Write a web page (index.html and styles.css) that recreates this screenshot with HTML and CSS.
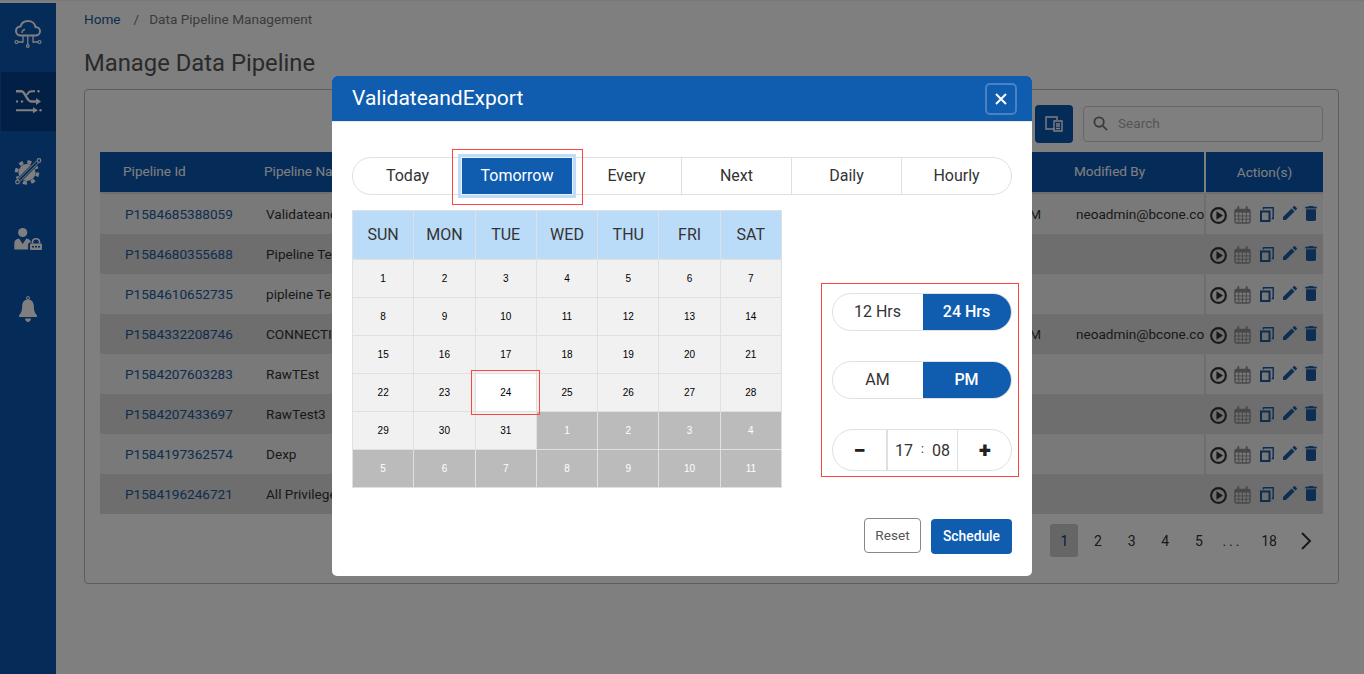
FILE: index.html
```html
<!DOCTYPE html>
<html>

<head>
    <title>Manage Data Pipeline</title>
    <link rel="stylesheet" href="styles.css">
</head>

<body>
<svg class="sprites" width="0" height="0">
    <symbol id="ic-play" viewBox="0 0 18 18">
        <circle cx="9" cy="9" r="7.800" fill="none" stroke="currentColor" stroke-width="2.200"/>
        <path d="M6.800 4.600 13.800 9 6.800 13.400z" fill="currentColor"/>
    </symbol>
    <symbol id="ic-cal" viewBox="0 0 18 19">
        <rect x="1" y="3.500" width="16" height="14.500" rx="1.500" fill="none" stroke="currentColor" stroke-width="1.400"/>
        <path d="M1 3.500h16v3.500H1z" fill="currentColor"/>
        <path d="M5 7v11M9 7v11M13 7v11M1 10.500h16M1 14h16" fill="none" stroke="currentColor" stroke-width="1"/>
        <path d="M4.500 1v3M13.500 1v3" fill="none" stroke="currentColor" stroke-width="2" stroke-linecap="round"/>
    </symbol>
    <symbol id="ic-copy" viewBox="0 0 14 15">
        <path d="M1 4.500h8.500V14H1z" fill="none" stroke="currentColor" stroke-width="2"/>
        <path d="M3.500 2.500V.8h9.700v10.700h-1.500" fill="none" stroke="currentColor" stroke-width="1.400"/>
    </symbol>
    <symbol id="ic-edit" viewBox="3 3 18 18">
        <path d="M3 17.250V21h3.750L17.810 9.940l-3.750-3.750L3 17.250zM20.710 7.040c.39-.39.39-1.020 0-1.410l-2.340-2.340c-.39-.39-1.020-.39-1.410 0l-1.830 1.830 3.750 3.750 1.830-1.830z" fill="currentColor"/>
    </symbol>
    <symbol id="ic-trash" viewBox="5 3 14 18">
        <path d="M6 19c0 1.100.9 2 2 2h8c1.100 0 2-.9 2-2V7H6v12zM19 4h-3.500l-1-1h-5l-1 1H5v2h14V4z" fill="currentColor"/>
    </symbol>
</svg>

<div class="app">
    <aside class="sidebar">
        <a class="side-item">
            <svg width="30" height="30" viewBox="0 0 30 30" fill="none" stroke="currentColor" stroke-width="2">
                <path d="M8 17.500c-3 0-5-2-5-4.500s2-4.500 4.500-4.500C8.500 5 11.500 3 15 3c4 0 7 2.500 7.500 6 2.500 0 4.500 2 4.500 4.300s-2 4.200-4.500 4.200z"/>
                <path d="M9 15c0-2 1.500-3.500 3-3.500" stroke-width="1.500"/>
                <path d="M14.800 17.500V27M10 17.500V24H5M20 17.500V24h5" stroke-width="1.300"/>
                <circle cx="14.800" cy="28" r="1.300" stroke-width="1.200"/><circle cx="3.500" cy="24" r="1.500" stroke-width="1.200"/><circle cx="26.500" cy="24" r="1.500" stroke-width="1.200"/>
            </svg>
        </a>
        <a class="side-item active">
            <svg width="26" height="26" viewBox="0 0 26 26" fill="none" stroke="currentColor" stroke-width="2.400">
                <path d="M0 2.200h5c5 0 5 10.300 10 10.300h7"/>
                <path d="M11 6c1-2.500 2.500-3.800 5-3.800h3M0 21.200h19" stroke-width="2"/>
                <path d="M20 9 25 12.500 20 16zM17 18.200l5 3-5 3z" fill="currentColor" stroke="none"/>
                <circle cx="22.500" cy="2.200" r="1.200" fill="currentColor" stroke="none"/>
                <circle cx="1" cy="12.500" r="1.200" fill="currentColor" stroke="none"/>
                <circle cx="6" cy="12.500" r="1.200" fill="currentColor" stroke="none"/>
                <circle cx="24.500" cy="21.200" r="1.200" fill="currentColor" stroke="none"/>
            </svg>
        </a>
        <a class="side-item">
            <svg width="28" height="28" viewBox="0 0 28 28" fill="none" stroke="currentColor">
                <circle cx="13" cy="15.500" r="8.500" fill="currentColor" stroke="none"/>
                <circle cx="13" cy="15.500" r="10.500" stroke-width="3.500" stroke-dasharray="4 4.250"/>
                <path d="M5 23.500 23.500 5" stroke="#0b57b0" stroke-width="5"/>
                <path d="M5 23.500 23.500 5" stroke-width="3.400"/>
                <path d="M5 23.500 23.500 5" stroke="#0b57b0" stroke-width="1.800"/>
                <circle cx="25" cy="3.500" r="1.800" stroke-width="1.200"/>
                <circle cx="3.500" cy="25" r="1.800" stroke-width="1.200"/>
            </svg>
        </a>
        <a class="side-item">
            <svg width="28" height="26" viewBox="0 0 28 26" fill="currentColor">
                <circle cx="8.700" cy="5.500" r="4.600"/>
                <path d="M.3 22.500V16c0-2.500 2-4 4.700-4.500l3.700 5.500 3.700-5.500c2.500.4 4.300 1.800 4.700 4h-1c-1.200 0-2 1-2 2v5z"/>
                <path d="M18.500 16.500V15c0-2 1.500-3.300 3.500-3.300s3.500 1.300 3.500 3.300v1.500" fill="none" stroke="currentColor" stroke-width="1.600"/>
                <rect x="16" y="16.500" width="12" height="6.500" rx="1"/>
                <path d="M18 19.700h8" stroke="#0b57b0" stroke-width="1.400" stroke-dasharray="2 1"/>
            </svg>
        </a>
        <a class="side-item">
            <svg width="18" height="26" viewBox="0 0 18 26" fill="currentColor">
                <path d="M9 3.500c-3.500 0-5.800 2.600-5.800 6.500 0 4-.8 7-3.200 9.500V21h18v-1.500c-2.400-2.500-3.200-5.500-3.200-9.500 0-3.900-2.300-6.500-5.800-6.500zM6 22.500c.3 2 1.500 3.500 3 3.500s2.700-1.500 3-3.500z"/>
                <circle cx="9" cy="2" r="1.500" fill="none" stroke="currentColor"/>
            </svg>
        </a>
    </aside>

    <main class="content">
        <nav class="crumbs">
            <a href="#">Home</a><span class="crumb-sep">/</span><span>Data Pipeline Management</span>
        </nav>
        <h1 class="page-title">Manage Data Pipeline</h1>

        <section class="card">
            <div class="toolbar">
                <button class="tool-btn">
                    <svg width="18" height="16" viewBox="0 0 18 16" fill="none" stroke="currentColor" stroke-width="1.400">
                        <path d="M10 13H1V1h11v3"/><path d="M9 5h8v10H9zM11 8h4M11 10h4M11 12.500h4"/>
                    </svg>
                </button>
                <label class="search">
                    <svg width="15" height="15" viewBox="0 0 16 16" fill="none" stroke="currentColor" stroke-width="2">
                        <circle cx="6.500" cy="6.500" r="5"/><path d="m10.500 10.500 4.500 4.500"/>
                    </svg>
                    <input type="text" placeholder="Search">
                </label>
            </div>

            <table class="grid">
                <colgroup>
                    <col class="c-id"><col class="c-name"><col class="c-on"><col class="c-by"><col class="c-act">
                </colgroup>
                <thead>
                    <tr><th>Pipeline Id</th><th>Pipeline Name</th><th>Modified On</th><th>Modified By</th><th class="act-head">Action(s)</th></tr>
                </thead>
                <tbody>
                    <tr>
                        <td><a href="#">P1584685388059</a></td><td>ValidateandExport</td><td class="on">06:36 PM</td><td>neoadmin@bcone.com</td>
                        <td class="act"><div class="acts"><svg class="i-play"><use href="#ic-play"/></svg><svg class="i-cal"><use href="#ic-cal"/></svg><svg class="i-copy"><use href="#ic-copy"/></svg><svg class="i-edit"><use href="#ic-edit"/></svg><svg class="i-trash"><use href="#ic-trash"/></svg></div></td>
                    </tr>
                    <tr>
                        <td><a href="#">P1584680355688</a></td><td>Pipeline Test</td><td></td><td></td>
                        <td class="act"><div class="acts"><svg class="i-play"><use href="#ic-play"/></svg><svg class="i-cal"><use href="#ic-cal"/></svg><svg class="i-copy"><use href="#ic-copy"/></svg><svg class="i-edit"><use href="#ic-edit"/></svg><svg class="i-trash"><use href="#ic-trash"/></svg></div></td>
                    </tr>
                    <tr>
                        <td><a href="#">P1584610652735</a></td><td>pipleine Test</td><td></td><td></td>
                        <td class="act"><div class="acts"><svg class="i-play"><use href="#ic-play"/></svg><svg class="i-cal"><use href="#ic-cal"/></svg><svg class="i-copy"><use href="#ic-copy"/></svg><svg class="i-edit"><use href="#ic-edit"/></svg><svg class="i-trash"><use href="#ic-trash"/></svg></div></td>
                    </tr>
                    <tr>
                        <td><a href="#">P1584332208746</a></td><td>CONNECTION</td><td class="on">04:56 PM</td><td>neoadmin@bcone.com</td>
                        <td class="act"><div class="acts"><svg class="i-play"><use href="#ic-play"/></svg><svg class="i-cal"><use href="#ic-cal"/></svg><svg class="i-copy"><use href="#ic-copy"/></svg><svg class="i-edit"><use href="#ic-edit"/></svg><svg class="i-trash"><use href="#ic-trash"/></svg></div></td>
                    </tr>
                    <tr>
                        <td><a href="#">P1584207603283</a></td><td>RawTEst</td><td></td><td></td>
                        <td class="act"><div class="acts"><svg class="i-play"><use href="#ic-play"/></svg><svg class="i-cal"><use href="#ic-cal"/></svg><svg class="i-copy"><use href="#ic-copy"/></svg><svg class="i-edit"><use href="#ic-edit"/></svg><svg class="i-trash"><use href="#ic-trash"/></svg></div></td>
                    </tr>
                    <tr>
                        <td><a href="#">P1584207433697</a></td><td>RawTest3</td><td></td><td></td>
                        <td class="act"><div class="acts"><svg class="i-play"><use href="#ic-play"/></svg><svg class="i-cal"><use href="#ic-cal"/></svg><svg class="i-copy"><use href="#ic-copy"/></svg><svg class="i-edit"><use href="#ic-edit"/></svg><svg class="i-trash"><use href="#ic-trash"/></svg></div></td>
                    </tr>
                    <tr>
                        <td><a href="#">P1584197362574</a></td><td>Dexp</td><td></td><td></td>
                        <td class="act"><div class="acts"><svg class="i-play"><use href="#ic-play"/></svg><svg class="i-cal"><use href="#ic-cal"/></svg><svg class="i-copy"><use href="#ic-copy"/></svg><svg class="i-edit"><use href="#ic-edit"/></svg><svg class="i-trash"><use href="#ic-trash"/></svg></div></td>
                    </tr>
                    <tr>
                        <td><a href="#">P1584196246721</a></td><td>All Privileges</td><td></td><td></td>
                        <td class="act"><div class="acts"><svg class="i-play"><use href="#ic-play"/></svg><svg class="i-cal"><use href="#ic-cal"/></svg><svg class="i-copy"><use href="#ic-copy"/></svg><svg class="i-edit"><use href="#ic-edit"/></svg><svg class="i-trash"><use href="#ic-trash"/></svg></div></td>
                    </tr>
                </tbody>
            </table>

            <ul class="pager">
                <li class="current">1</li><li>2</li><li>3</li><li>4</li><li>5</li><li class="dots">...</li><li class="wide">18</li>
                <li><svg width="12" height="18" viewBox="0 0 12 18" fill="none" stroke="currentColor" stroke-width="2"><path d="m2 1 8 8-8 8"/></svg></li>
            </ul>
        </section>
    </main>
</div>

<div class="overlay">
    <div class="modal">
        <header class="modal-head">
            <h2>ValidateandExport</h2>
            <button class="close-btn">
                <svg width="12" height="12" viewBox="0 0 12 12" fill="none" stroke="currentColor" stroke-width="2"><path d="m1 1 10 10M11 1 1 11"/></svg>
            </button>
        </header>

        <div class="modal-body">
            <div class="tabs">
                <div class="tab">Today</div>
                <div class="tab selected">Tomorrow</div>
                <div class="tab">Every</div>
                <div class="tab">Next</div>
                <div class="tab">Daily</div>
                <div class="tab">Hourly</div>
            </div>

            <div class="schedule">
                <div class="calendar">
                    <div class="cal-head">SUN</div><div class="cal-head">MON</div><div class="cal-head">TUE</div><div class="cal-head">WED</div><div class="cal-head">THU</div><div class="cal-head">FRI</div><div class="cal-head">SAT</div>
                    <div class="cal-day">1</div><div class="cal-day">2</div><div class="cal-day">3</div><div class="cal-day">4</div><div class="cal-day">5</div><div class="cal-day">6</div><div class="cal-day">7</div>
                    <div class="cal-day">8</div><div class="cal-day">9</div><div class="cal-day">10</div><div class="cal-day">11</div><div class="cal-day">12</div><div class="cal-day">13</div><div class="cal-day">14</div>
                    <div class="cal-day">15</div><div class="cal-day">16</div><div class="cal-day">17</div><div class="cal-day">18</div><div class="cal-day">19</div><div class="cal-day">20</div><div class="cal-day">21</div>
                    <div class="cal-day">22</div><div class="cal-day">23</div><div class="cal-day today">24</div><div class="cal-day">25</div><div class="cal-day">26</div><div class="cal-day">27</div><div class="cal-day">28</div>
                    <div class="cal-day">29</div><div class="cal-day">30</div><div class="cal-day">31</div><div class="cal-day off">1</div><div class="cal-day off">2</div><div class="cal-day off">3</div><div class="cal-day off">4</div>
                    <div class="cal-day off">5</div><div class="cal-day off">6</div><div class="cal-day off">7</div><div class="cal-day off">8</div><div class="cal-day off">9</div><div class="cal-day off">10</div><div class="cal-day off">11</div>
                </div>

                <div class="time-panel">
                    <div class="toggle">
                        <div class="opt">12 Hrs</div>
                        <div class="opt on">24 Hrs</div>
                    </div>
                    <div class="toggle">
                        <div class="opt">AM</div>
                        <div class="opt on">PM</div>
                    </div>
                    <div class="stepper">
                        <div class="step minus">&minus;</div>
                        <div class="clock"><span>17</span><span class="colon">:</span><span>08</span></div>
                        <div class="step plus">+</div>
                    </div>
                </div>
            </div>

            <div class="modal-foot">
                <button class="btn-reset">Reset</button>
                <button class="btn-schedule">Schedule</button>
            </div>
        </div>
    </div>
</div>
</body>
</html>
```

FILE: styles.css
```css
* {
    box-sizing: border-box;
}
body, html {
    padding: 0;
    margin: 0;
    height: 100%;
    overflow: hidden;
}
body {
    font-family: Roboto, "Liberation Sans", sans-serif;
    font-size: 13.6px;
    color: #333;
    background-color: #fff;
}
a {
    color: #1a5aa4;
    text-decoration: none;
}
.sprites {
    position: absolute;
}

/* page behind the dialog */
.app {
    display: flex;
    height: 100%;
    padding-top: 3px;
    border-top: 1px solid #f0f0f0;
}
.sidebar {
    width: 56px;
    background-color: #0b57b0;
    color: #fff;
    display: flex;
    flex-direction: column;
    gap: 10px;
    margin-top: -1px;
}
.side-item {
    height: 59px;
    display: flex;
    align-items: center;
    justify-content: center;
    color: #fff;
}
.side-item.active {
    background-color: #043f8a;
    margin-left: 1px;
}
.content {
    flex: 1;
    padding: 0 25px 0 28px;
    min-width: 0;
}
.crumbs {
    height: 31px;
    line-height: 31px;
    color: #777;
}
.crumb-sep {
    margin: 0 10px 0 13px;
}
.page-title {
    margin: 0;
    height: 54px;
    line-height: 56px;
    font-size: 23.8px;
    font-weight: 400;
    color: #555;
}
.card {
    height: 495px;
    border: 1px solid #bbb;
    border-radius: 4px;
    padding: 15px 15px 0;
}
.toolbar {
    display: flex;
    justify-content: flex-end;
    align-items: flex-start;
    gap: 10px;
    height: 38px;
    margin-bottom: 9px;
}
.tool-btn {
    width: 38px;
    height: 38px;
    border: 0;
    border-radius: 4px;
    padding: 0;
    color: #fff;
    background-color: #0b57b0;
    display: flex;
    align-items: center;
    justify-content: center;
}
.search {
    width: 240px;
    height: 36px;
    margin-top: 1px;
    border: 1px solid #ccc;
    border-radius: 4px;
    display: flex;
    align-items: center;
    gap: 10px;
    padding: 0 0 1px 9px;
    color: #777;
}
.search input {
    border: 0;
    outline: none;
    background: transparent;
    font-family: inherit;
    font-size: 13.6px;
    width: 180px;
    padding: 0 0 1px;
}
.search input::placeholder {
    color: #aaa;
}
.grid {
    width: 1223px;
    table-layout: fixed;
    border-collapse: separate;
    border-spacing: 0;
}
.c-id { width: 141px; }
.c-name { width: 400px; }
.c-on { width: 410px; }
.c-by { width: 153px; }
.c-act { width: 119px; }
.grid th {
    height: 42px;
    background-color: #0b57b0;
    background-clip: padding-box;
    color: #fff;
    font-weight: 400;
    text-align: left;
    padding: 0 0 2px 23px;
    border-bottom: 2px solid #ddd;
}
.grid th.act-head {
    text-align: center;
    padding: 0;
    border-left: 2px solid #fff;
}
.grid td {
    height: 40px;
    padding: 0 0 0 25px;
    white-space: nowrap;
    overflow: hidden;
}
.grid tbody tr:nth-child(odd) {
    background-color: #f2f2f2;
}
.grid tbody tr:nth-child(even) {
    background-color: #dcdcdc;
}
.grid td.on {
    text-align: right;
    padding: 0 10px 0 0;
}
.grid td.act {
    padding: 12px 0 0;
    vertical-align: top;
    border-left: 2px solid #ddd;
}
.acts {
    display: flex;
    align-items: flex-start;
    height: 22px;
}
.acts svg {
    flex: none;
}
.i-play {
    width: 17px;
    height: 17px;
    color: #333;
    margin: 1px 0 0 4px;
}
.i-cal {
    width: 17px;
    height: 18px;
    color: #909090;
    margin-left: 7px;
}
.i-copy {
    width: 14px;
    height: 15px;
    color: #1a5aa4;
    margin: 1px 0 0 9px;
}
.i-edit {
    width: 14px;
    height: 14px;
    color: #1a5aa4;
    margin-left: 9px;
}
.i-trash {
    width: 12px;
    height: 15px;
    color: #1a5aa4;
    margin-left: 8px;
}
.pager {
    list-style-type: none;
    margin: 10px 3.4px 0 0;
    padding: 0;
    display: flex;
    justify-content: flex-end;
    gap: 5.6px;
}
.pager li {
    width: 28px;
    height: 33px;
    display: flex;
    align-items: center;
    justify-content: center;
    color: #333;
    font-size: 14px;
}
.pager li.wide {
    width: 34px;
}
.pager li.dots {
    letter-spacing: 3px;
}
.pager li.current {
    background-color: #ccc;
    border-radius: 3px;
    color: #0f3a70;
}

/* dialog */
.overlay {
    position: fixed;
    top: 0;
    left: 0;
    width: 100%;
    height: 100%;
    background-color: rgba(0,0,0,0.5);
    display: flex;
    justify-content: center;
    align-items: flex-start;
}
.modal {
    width: 700px;
    height: 500px;
    margin-top: 76px;
    background-color: #fff;
    border-radius: 5px;
}
.modal-head {
    height: 46px;
    background-color: #105caf;
    border-bottom: 1px solid #e8e8e8;
    border-radius: 5px 5px 0 0;
    padding: 0 15px 0 20px;
    display: flex;
    align-items: center;
    justify-content: space-between;
}
.modal-head h2 {
    margin: 0 0 2px;
    color: #fff;
    font-size: 21px;
    font-weight: 400;
}
.close-btn {
    width: 32px;
    height: 32px;
    border: 2px solid #4a82c4;
    border-radius: 5px;
    padding: 0;
    color: #fff;
    background-color: #105caf;
    display: flex;
    align-items: center;
    justify-content: center;
}
.modal-body {
    padding: 35px 20px 0;
}
.tabs {
    display: flex;
    height: 38px;
    border: 1px solid #e0e0e0;
    border-radius: 19px;
}
.tab {
    flex: none;
    width: 110px;
    display: flex;
    align-items: center;
    justify-content: center;
    padding-bottom: 2px;
    font-size: 16px;
    border-left: 1px solid #e0e0e0;
    color: #333;
}
.tab:first-child {
    width: 109px;
    border-left: 0;
}
.tab.selected {
    position: relative;
    border-left: 0;
    color: #fff;
    background-color: #105caf;
    box-shadow: 0 0 0 1px #e8f2fc, 0 0 0 4px #bfdcf8;
}
.tab.selected::after {
    content: "";
    position: absolute;
    top: -9px;
    right: -11px;
    bottom: -11px;
    left: -10px;
    border: 1px solid #f44;
}
.tab.selected + .tab {
    width: 109px;
    border-left: 0;
}
.schedule {
    display: flex;
    margin: 15px -7px 0 0;
}
.calendar {
    width: 430px;
    height: 278px;
    flex: none;
    display: grid;
    grid-template-columns: repeat(7, 1fr);
    grid-template-rows: 49px repeat(6, 38px);
    border-top: 1px solid #e0e0e0;
    border-left: 1px solid #e0e0e0;
}
.cal-head, .cal-day {
    display: flex;
    align-items: center;
    justify-content: center;
    padding-bottom: 1px;
    border-right: 1px solid #e0e0e0;
    border-bottom: 1px solid #e0e0e0;
}
.cal-head {
    background-color: #bbdcf9;
    font-size: 16px;
    color: #333;
}
.cal-day {
    background-color: #f1f1f1;
    font-family: "Liberation Sans", Arial, sans-serif;
    font-size: 10px;
    color: #000;
}
.cal-day.off {
    background-color: #bbb;
    color: #fff;
}
.cal-day.today {
    position: relative;
    background-color: #fff;
}
.cal-day.today::after {
    content: "";
    position: absolute;
    top: -4px;
    right: -4px;
    bottom: -4px;
    left: -5px;
    border: 1px solid #f44;
}
.time-panel {
    width: 198px;
    height: 194px;
    margin: 73px 0 0 39px;
    border: 1px solid #f44;
    padding: 9px 6px 0 10px;
    display: flex;
    flex-direction: column;
    gap: 30px;
}
.toggle {
    display: flex;
    height: 38px;
    border: 1px solid #e0e0e0;
    border-radius: 19px;
    overflow: hidden;
}
.opt {
    flex: 1;
    display: flex;
    align-items: center;
    justify-content: center;
    padding: 0 1px 2px 0;
    font-size: 16px;
    color: #333;
}
.opt.on {
    flex: none;
    width: 88px;
    background-color: #105caf;
    color: #fff;
    font-weight: 500;
}
.stepper {
    display: flex;
    height: 42px;
    border: 1px solid #e0e0e0;
    border-radius: 21px;
}
.step {
    display: flex;
    align-items: center;
    justify-content: center;
    font-size: 22px;
    font-weight: 900;
    color: #222;
}
.step.minus {
    width: 55px;
    border-right: 2px solid #e0e0e0;
}
.step.plus {
    flex: 1;
    padding-left: 1px;
    border-left: 1px solid #e0e0e0;
}
.clock {
    width: 69px;
    display: flex;
    align-items: center;
    justify-content: center;
    gap: 8px;
    font-size: 16px;
}
.colon {
    font-size: 12px;
    margin-top: -3px;
}
.modal-foot {
    display: flex;
    justify-content: flex-end;
    align-items: flex-start;
    gap: 10px;
    margin-top: 30px;
}
.btn-reset, .btn-schedule {
    height: 35px;
    border-radius: 4px;
    font-family: inherit;
    padding: 0 0 2px;
}
.btn-reset {
    width: 57px;
    border: 1px solid #888;
    background-color: #fff;
    color: #555;
    font-size: 13.6px;
}
.btn-schedule {
    width: 81px;
    border: 0;
    background-color: #105caf;
    color: #fff;
    font-size: 13.8px;
    font-weight: 500;
    margin-top: 1px;
}
```
